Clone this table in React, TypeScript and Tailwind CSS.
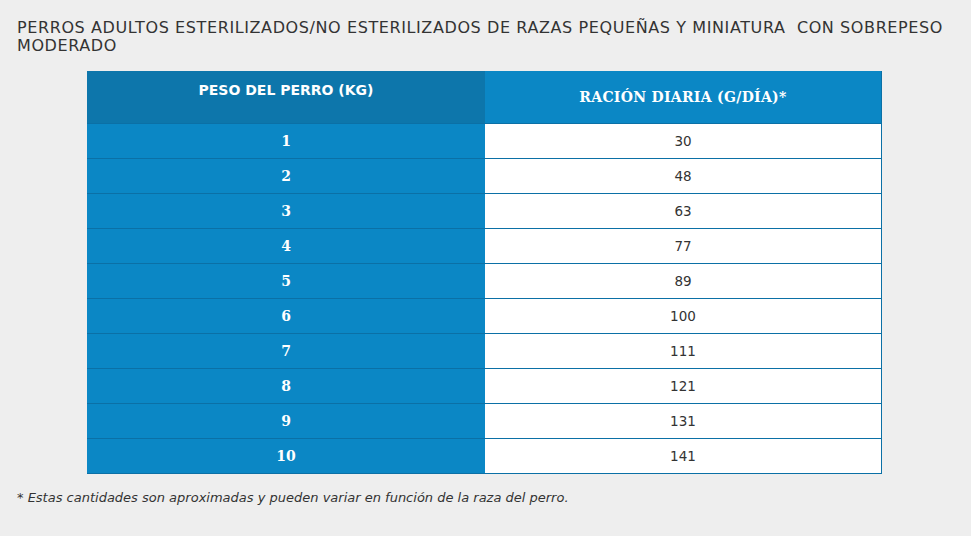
const rows = [
	{ kg: "1", g: "30" },
	{ kg: "2", g: "48" },
	{ kg: "3", g: "63" },
	{ kg: "4", g: "77" },
	{ kg: "5", g: "89" },
	{ kg: "6", g: "100" },
	{ kg: "7", g: "111" },
	{ kg: "8", g: "121" },
	{ kg: "9", g: "131" },
	{ kg: "10", g: "141" },
];

export default function App() {
	return (
		<main className="min-h-[536px] w-full bg-[#eeeeee] px-[17px] pt-[19px] font-['DejaVu_Sans',Verdana,sans-serif]">
			<h1 className="max-w-[940px] text-[16px] leading-[18px] font-normal tracking-[0.6px] text-[#333333]">
				PERROS ADULTOS ESTERILIZADOS/NO ESTERILIZADOS DE RAZAS PEQUEÑAS Y MINIATURA&nbsp; CON SOBREPESO MODERADO
			</h1>

			<div className="mt-[16px] ml-[70px] w-[795px] border-r border-b border-[#0b70a6]">
				<div className="flex h-[52px]">
					<div className="w-[398px] bg-[#0d76ab] pt-[9px] text-center text-[14px] font-bold text-white">
						PESO DEL PERRO (KG)
					</div>
					<div className="flex flex-1 items-center justify-center bg-[#0b87c5] pt-[1px] font-['DejaVu_Serif',serif] text-[14px] font-bold tracking-[0.3px] text-white">
						RACIÓN DIARIA (G/DÍA)*
					</div>
				</div>
				{rows.map(row => (
					<div key={row.kg} className="flex h-[35px] border-t border-[#0b70a6]">
						<div className="flex w-[398px] items-center justify-center bg-[#0b87c5] font-['DejaVu_Serif',serif] text-[14px] font-bold text-white">
							{row.kg}
						</div>
						<div className="flex flex-1 items-center justify-center bg-white text-[13.5px] text-[#333333]">
							{row.g}
						</div>
					</div>
				))}
			</div>

			<p className="mt-[14px] text-[13px] italic text-[#333333]">
				* Estas cantidades son aproximadas y pueden variar en función de la raza del perro.
			</p>
		</main>
	);
}
